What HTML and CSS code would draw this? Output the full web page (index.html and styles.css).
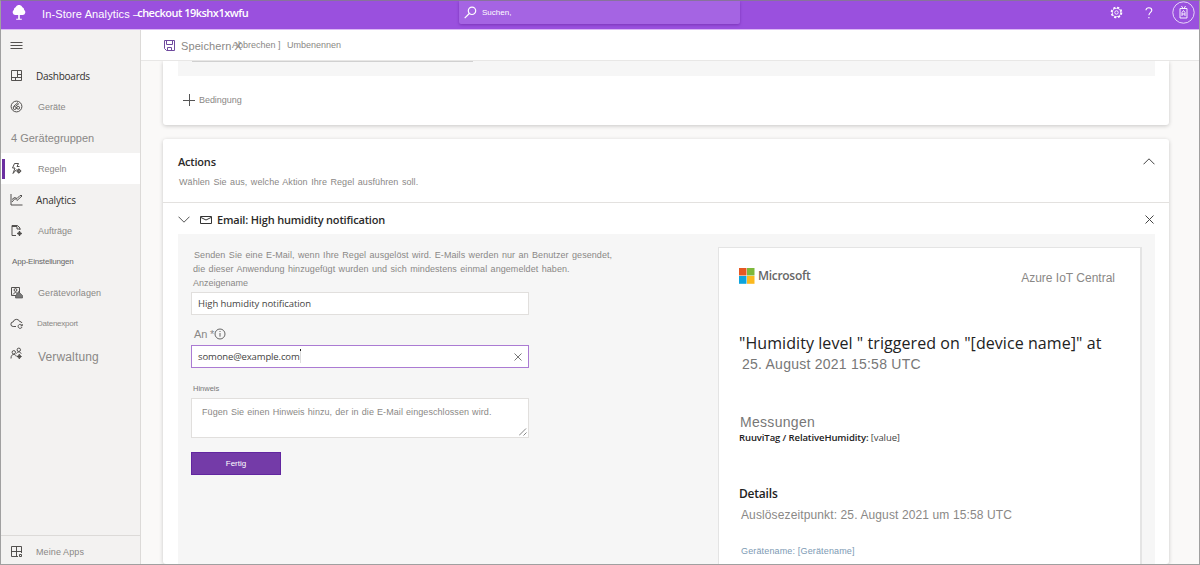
FILE: index.html
```html
<!DOCTYPE html>
<html lang="de">
<head>
<meta charset="utf-8">
<title>In-Store Analytics</title>
<link rel="stylesheet" href="styles.css">
</head>
<body>
<div class="app">
  <header class="topbar">
    <svg class="tree" width="14" height="16" viewBox="0 0 14 16"><path d="M6.2 10H3.2A2.8 2.8 0 0 1 1.8 5 3 3 0 0 1 3.6 2.2a3.7 3.7 0 0 1 6.8 0A3 3 0 0 1 12.2 5 2.8 2.8 0 0 1 10.8 10H7.8v3.8h2v1H4.2v-1h2z" fill="#fff"/></svg>
    <div class="brand"><span class="brand-name">In-Store Analytics –</span><b class="brand-app">checkout 19kshx1xwfu</b></div>
    <div class="search">
      <svg width="13" height="13" viewBox="0 0 13 13" fill="none" stroke="#fff" stroke-width="1.2"><circle cx="8" cy="4.8" r="3.7"/><path d="M5.3 7.5L.7 12.1"/></svg>
      <span>Suchen,</span>
    </div>
    <div class="top-icons">
      <svg class="gear" width="13" height="13" viewBox="0 0 13 13" fill="none" stroke="#fff"><circle cx="6.5" cy="6.5" r="5" stroke-width="1.6" stroke-dasharray="2.2 1.727"/><circle cx="6.5" cy="6.5" r="4.1" stroke-width=".8"/><circle cx="6.5" cy="6.5" r="1.7" stroke-width=".9"/></svg>
      <svg class="help" width="8" height="12" viewBox="0 0 8 12" fill="none" stroke="#fff" stroke-width="1.1"><path d="M1 3.3C1 1.6 2.2.7 3.9.7s2.9 1 2.9 2.5C6.8 5.3 3.9 5.5 3.9 8.3M3.9 10v1.3"/></svg>
      <svg class="avatar" width="23" height="23" viewBox="0 0 23 23" fill="none" stroke="#fff"><circle cx="11.5" cy="11.5" r="10.7" stroke-opacity=".75"/><path d="M8 7.500h7v9.500H8zM9.500 5l1.500 2.500M13.500 5L12 7.500M10 15v-3.500l1.500-2 1.500 2V15M10 13h3" stroke-width=".9"/></svg>
    </div>
  </header>
  <div class="body">
    <nav class="side">
      <div class="row menu"><svg class="ic" viewBox="0 0 13 13"><path d="M.5 3.500h12M.5 6.500h12M.5 9.500h12"/></svg></div>
      <div class="row"><svg class="ic" viewBox="0 0 13 13"><path d="M1.500 1.500h10v10h-10zM1.500 8.500h6M7.500 1.500v7M7.500 5.500h4M5.500 8.500v3M7.500 8.500h4"/></svg><span class="t-dash">Dashboards</span></div>
      <div class="row"><svg class="ic" viewBox="0 0 13 13"><circle cx="6.500" cy="6.500" r="5.400"/><circle cx="4.700" cy="8" r="1.500"/><circle cx="8.200" cy="7.800" r="1.400"/><path d="M3.500 6.500L8 2.500M6 6l3-2.500M6 8h1"/></svg><span class="t-ger">Geräte</span></div>
      <div class="row"><span class="t-grp">4 Gerätegruppen</span></div>
      <div class="row active"><svg class="ic" viewBox="0 0 13 13"><path d="M4.500 1.500h4L7 4.500h2.500M4.500 1.500L2.500 6H5L3 11.500 6.500 7.500"/><circle cx="8.800" cy="9" r="1.700"/><path d="M8.800 6.500v5M6.500 9h4.800"/></svg><span class="t-reg">Regeln</span></div>
      <div class="row"><svg class="ic" viewBox="0 0 13 13"><path d="M1 1v11h11.500M2 9l3-3.500L7 7.500 12 3M2 6.500l2.500-2 2.500 1L10 2.500h2"/></svg><span class="t-ana">Analytics</span></div>
      <div class="row"><svg class="ic" viewBox="0 0 13 13"><path d="M6 11.500H2v-10h5.500L10 4v2M2 2.500h5V5h3"/><circle cx="9.500" cy="9.500" r="1.600"/><path d="M9.500 7v5M7.200 9.500h4.600"/></svg><span class="t-auf">Aufträge</span></div>
      <div class="row"><span class="t-app">App-Einstellungen</span></div>
      <div class="row"><svg class="ic" viewBox="0 0 13 13"><path d="M1.500 1.500h8v8h-8z"/><circle cx="5.500" cy="4" r="1.400"/><path d="M3 8.500l2.500-2.500 2 2"/><path d="M8.500 5.500l4 4v2.500h-7V10z" fill="#777" stroke="#555" stroke-width=".7"/></svg><span class="t-vor">Gerätevorlagen</span></div>
      <div class="row"><svg class="ic" viewBox="0 0 13 13"><path d="M6 9.500H3.200a2.300 2.300 0 0 1 0-4.600 3.400 3.400 0 0 1 6.500-.3A2.200 2.200 0 0 1 12 6"/><path d="M11.900 8.500A2 2 0 1 0 12 10M12.200 7v1.800h-1.600"/></svg><span class="t-dat">Datenexport</span></div>
      <div class="row"><svg class="ic up" viewBox="0 0 13 13"><circle cx="3.800" cy="5.300" r="1.700"/><path d="M1 11.500C1 8.500 2.200 7.500 3.800 7.500S6 8.300 6.300 9.500"/><circle cx="8.800" cy="2.800" r="1.700"/><path d="M6.500 6.500C7 5.300 7.800 5 8.800 5s2 .5 2.400 1.700"/><circle cx="9.300" cy="9.500" r="1.500"/><path d="M9.300 7v5M7 9.500h4.600"/></svg><span class="t-ver">Verwaltung</span></div>
      <div class="row foot"><svg class="ic" viewBox="0 0 13 13"><path d="M1.500 1.500h10V8M1.500 1.500v10H8M1.500 6.500h10M6.500 1.500v10"/><path d="M9.500 9.500h2v2h-2z"/></svg><span class="t-mei">Meine Apps</span></div>
    </nav>
    <main class="main">
      <div class="toolbar">
        <svg width="11" height="11" viewBox="0 0 11 11" fill="none" stroke="#6f4a9e"><path d="M.5.5h10v10h-8l-2-2zM2.500.5v4h6v-4M3.500 10.500v-3h4v3"/></svg>
        <span class="tb-save">Speichern X</span><span class="tb-cancel">Abbrechen ]</span><span class="tb-ren">Umbenennen</span>
      </div>
      <div class="canvas">
        <section class="card conditions">
          <div class="stub"><div class="stub-line"></div></div>
          <div class="add"><svg width="12" height="12" viewBox="0 0 12 12" stroke="#555" fill="none"><path d="M0 6.500h12M6.500 0v12"/></svg><span>Bedingung</span></div>
        </section>
        <section class="card actions">
          <div class="act-head">
            <div><h2>Actions</h2><p>Wählen Sie aus, welche Aktion Ihre Regel ausführen soll.</p></div>
            <svg width="12" height="7" viewBox="0 0 12 7" fill="none" stroke="#444"><path d="M.5 6.300L6 .8l5.500 5.500"/></svg>
          </div>
          <div class="mail-head">
            <svg width="12" height="7" viewBox="0 0 12 7" fill="none" stroke="#555"><path d="M.5.7L6 6.200 11.500.7"/></svg>
            <svg class="env" width="12" height="8" viewBox="0 0 12 8" fill="none" stroke="#333"><path d="M.5.5h11v7H.5zM1 1.500l5 2.500 5-2.500"/></svg>
            <h3>Email: High humidity notification</h3>
            <svg class="close" width="9" height="9" viewBox="0 0 9 9" stroke="#444"><path d="M.5.5l8 8M8.500.5l-8 8"/></svg>
          </div>
          <div class="panel">
            <form class="form">
              <p class="intro"><span class="in1">Senden Sie eine E-Mail, wenn Ihre Regel ausgelöst wird. E-Mails werden nur an Benutzer gesendet,</span><span class="in2">die dieser Anwendung hinzugefügt wurden und sich mindestens einmal angemeldet haben.</span></p>
              <label class="l-name">Anzeigename</label>
              <div class="field"><span class="v-name">High humidity notification</span></div>
              <label class="l-to"><span>An *</span><svg width="12" height="12" viewBox="0 0 12 12" fill="none" stroke="#666"><circle cx="6" cy="6" r="5"/><path d="M6 5v3.700M6 3v1"/></svg></label>
              <div class="field focus"><span class="v-to">somone@example.com</span><i class="caret"></i><svg class="clear" width="8" height="8" viewBox="0 0 8 8" stroke="#777"><path d="M.5.5l7 7M7.500.5l-7 7"/></svg></div>
              <label class="l-note">Hinweis</label>
              <div class="field area"><span class="v-note">Fügen Sie einen Hinweis hinzu, der in die E-Mail eingeschlossen wird.</span><svg class="grip" width="8" height="8" viewBox="0 0 8 8" stroke="#777" stroke-width=".9"><path d="M0 7.500L7 .5M4.500 7.500l3-3"/></svg></div>
              <div class="btn">Fertig</div>
            </form>
            <article class="preview">
              <div class="pv-top">
                <svg width="16" height="16" viewBox="0 0 16 16"><path d="M0 0h7.500v7.500H0z" fill="#e55722"/><path d="M8 0h7.500v7.500H8z" fill="#7db83b"/><path d="M0 8h7.500v7.800H0z" fill="#0da4dd"/><path d="M8 8h7.500v7.800H8z" fill="#fbb91f"/></svg>
                <span class="ms">Microsoft</span><span class="iot">Azure IoT Central</span>
              </div>
              <div class="pv-title">"Humidity level " triggered on "[device name]" at</div>
              <div class="pv-date">25. August 2021 15:58 UTC</div>
              <div class="pv-meas">Messungen</div>
              <div class="pv-val"><b>RuuviTag / RelativeHumidity:</b> <span>[value]</span></div>
              <div class="pv-det">Details</div>
              <div class="pv-time">Auslösezeitpunkt: 25. August 2021 um 15:58 UTC</div>
              <div class="pv-dev">Gerätename: [Gerätename]</div>
            </article>
          </div>
        </section>
      </div>
    </main>
  </div>
</div>
</body>
</html>
```
FILE: styles.css
```css
* { box-sizing: border-box; }
body { margin: 0; font-family: "Liberation Sans", Arial, sans-serif; color: #8a8886; }
h2, h3, p { margin: 0; }
svg { flex: none; display: block; }
span, b { white-space: nowrap; }
.app { width: 1200px; height: 565px; border: 1px solid #a0a0a0; border-top-color: #87739c; overflow: hidden; display: flex; flex-direction: column; }

/* Header */
.topbar { height: 29px; flex: none; display: flex; background: #9a50de; border-bottom: 1px solid #dcb8f5; color: #fff; }
.tree { margin: 4px 0 0 11px; }
.brand { width: 433px; padding-left: 16px; display: flex; line-height: 27px; }
.brand-name { font-size: 11px; letter-spacing: .12px; }
.brand-app { font: 600 11px/24px "Open Sans", sans-serif; letter-spacing: -.5px; margin-left: -2px; }
.search { width: 281px; height: 23px; border-radius: 0 0 2px 2px; background: #a564e3; box-shadow: 0 1px 3px #7a35b9; display: flex; align-items: center; padding-left: 5px; gap: 5px; font-size: 8px; }
.top-icons { margin-left: auto; display: flex; align-items: center; height: 23px; padding-right: 4px; }
.help { margin-left: 22px; }
.avatar { margin-left: 19px; }

/* Sidebar */
.body { flex: 1; min-height: 0; display: flex; }
.side { width: 140px; flex: none; background: #f3f2f1; border-right: 1px solid #dcdad8; display: flex; flex-direction: column; }
.row { height: 31px; flex: none; display: flex; align-items: center; padding-left: 9px; font-size: 9px; }
.menu { height: 30px; }
.active { background: #fff; padding-left: 9px; background: linear-gradient(#6b2fa0, #6b2fa0) 1px 6px / 3px 20px no-repeat #fff; }
.ic { width: 13px; height: 13px; fill: none; stroke: #4a4846; stroke-width: .95; }
.up { margin-top: -3px; }
.t-dash, .t-ana { font: 10px "Open Sans", sans-serif; color: #33312f; margin-left: 13px; }
.t-dash { letter-spacing: -.25px; }
.t-ana { letter-spacing: -.15px; }
.t-ger, .t-reg, .t-auf, .t-vor { margin-left: 15px; }
.t-vor { letter-spacing: .08px; }
.t-grp { font-size: 11px; margin-left: 1px; }
.t-app { font-size: 8px; letter-spacing: -.2px; margin-left: 2px; color: #666; }
.t-dat { font-size: 8px; letter-spacing: -.25px; margin-left: 14px; }
.t-ver { font-size: 12px; letter-spacing: .15px; margin: 5px 0 0 15px; }
.foot { margin-top: auto; height: 29px; border-top: 1px solid #dcdad8; padding-top: 3px; }
.t-mei { margin-left: 13px; letter-spacing: .1px; }

/* Command bar */
.main { flex: 1; min-width: 0; display: flex; flex-direction: column; background: #faf9f8; }
.toolbar { height: 31px; flex: none; border-bottom: 1px solid #e8e7e6; background: #fff; display: flex; align-items: center; padding-left: 23px; }
.tb-save { font-size: 11px; margin: 2px 0 0 6px; width: 51px; letter-spacing: .1px; }
.tb-cancel { font-size: 9px; width: 55px; }
.tb-ren { font-size: 9px; }

/* Cards */
.canvas { flex: 1; min-height: 0; padding: 0 30px 0 22px; display: flex; flex-direction: column; overflow: hidden; }
.card { background: #fff; border-radius: 3px; box-shadow: 0 1px 4px rgba(0,0,0,.2); padding: 0 14px 0 15px; }
.conditions { height: 64px; flex: none; margin-bottom: 14px; border-radius: 0 0 3px 3px; }
.stub { height: 15px; background: #f6f6f6; padding-left: 14px; }
.stub-line { width: 281px; height: 1px; background: #d0d0d0; }
.add { display: flex; align-items: center; padding: 18px 0 0 5px; gap: 4px; font-size: 9px; letter-spacing: -.05px; }
.actions { flex: 1; min-height: 0; display: flex; flex-direction: column; }
.act-head { height: 64px; flex: none; margin: 0 -14px 0 -15px; padding: 16px 14px 0 15px; display: flex; justify-content: space-between; border-bottom: 1px solid #e3e1df; }
.act-head > svg { margin: 3px 0 0; }
h2 { font: 600 11px/14px "Open Sans", sans-serif; letter-spacing: -.2px; color: #2b2a29; }
.act-head p { font-size: 9px; line-height: 12px; margin: 7px 0 0 1px; word-spacing: .9px; letter-spacing: .07px; }
.mail-head { height: 31px; flex: none; display: flex; align-items: center; padding-top: 2px; }
.env { margin-left: 10px; }
h3 { font: 600 11px/14px "Open Sans", sans-serif; letter-spacing: -.18px; color: #2b2a29; margin-left: 5px; }
.close { margin: 0 1px 0 auto; }
.panel { flex: 1; min-height: 0; background: #f6f6f6; display: flex; justify-content: space-between; padding: 13px 13px 0 13px; }

/* Form */
.form { width: 430px; }
.intro { font-size: 9px; line-height: 14px; padding-top: 1px; word-spacing: .8px; letter-spacing: .07px; }
.intro span { display: block; }
.in1 { margin-left: 3px; }
.in2 { margin-left: 2px; }
label { display: flex; align-items: center; }
.l-name { font-size: 9px; height: 14px; margin: 0 0 2px 2px; }
.field { position: relative; width: 338px; height: 23px; border: 1px solid #e1dfdd; background: #fff; display: flex; align-items: center; padding: 0 6px; }
.v-name, .v-to { font: 9.5px "Open Sans", sans-serif; color: #454443; }
.v-name { letter-spacing: -.06px; }
.v-to { letter-spacing: -.13px; }
.l-to { font-size: 11px; height: 12px; margin: 13px 0 5px 3px; letter-spacing: -.2px; }
.focus { border-color: #ab7bd3; }
.caret { width: 1px; height: 14px; margin: -1px 0 0 0; background: linear-gradient(#222 2px, #ddd 2px); }
.clear { margin-left: auto; }
.l-note { font-size: 7.5px; height: 10px; margin: 15px 0 5px 2px; color: #777; }
.area { height: 40px; align-items: flex-start; padding: 8px 10px; font-size: 9px; word-spacing: .5px; letter-spacing: .07px; }
.grip { position: absolute; right: 1px; bottom: 1px; }
.btn { width: 90px; height: 23px; margin-top: 14px; background: #743ba8; border: 1px solid #6226a0; color: #fff; font-size: 8px; line-height: 21px; text-align: center; }

/* Email preview */
.preview { width: 424px; background: #fff; border: 1px solid #e4e4e4; border-right-width: 2px; border-bottom: 0; padding: 0 25px 0 20px; display: flex; flex-direction: column; white-space: nowrap; }
.pv-top { display: flex; margin-top: 20px; height: 20px; }
.ms { font: 600 12px/16px "Open Sans", sans-serif; color: #666; margin-left: 3px; letter-spacing: -.3px; }
.iot { font-size: 12px; line-height: 20px; margin-left: auto; }
.pv-title { font: 16px/20px "Open Sans", sans-serif; letter-spacing: .07px; color: #222; margin-top: 45px; }
.pv-date { font-size: 14px; line-height: 20px; letter-spacing: .24px; margin: 1px 0 0 3px; color: #777; }
.pv-meas { font-size: 14px; line-height: 18px; letter-spacing: .3px; margin: 39px 0 0 1px; color: #777; }
.pv-val { font: 9.5px/14px "Open Sans", sans-serif; letter-spacing: -.1px; color: #444; }
.pv-val b { font-weight: 600; color: #222; }
.pv-det { font: 600 12px/16px "Open Sans", sans-serif; letter-spacing: -.2px; color: #222; margin-top: 41px; }
.pv-time { font-size: 12px; line-height: 16px; letter-spacing: .12px; margin: 5px 0 0 2px; }
.pv-dev { font-size: 9px; line-height: 12px; letter-spacing: .15px; margin: 22px 0 0 2px; color: #7d9ab4; }
```
